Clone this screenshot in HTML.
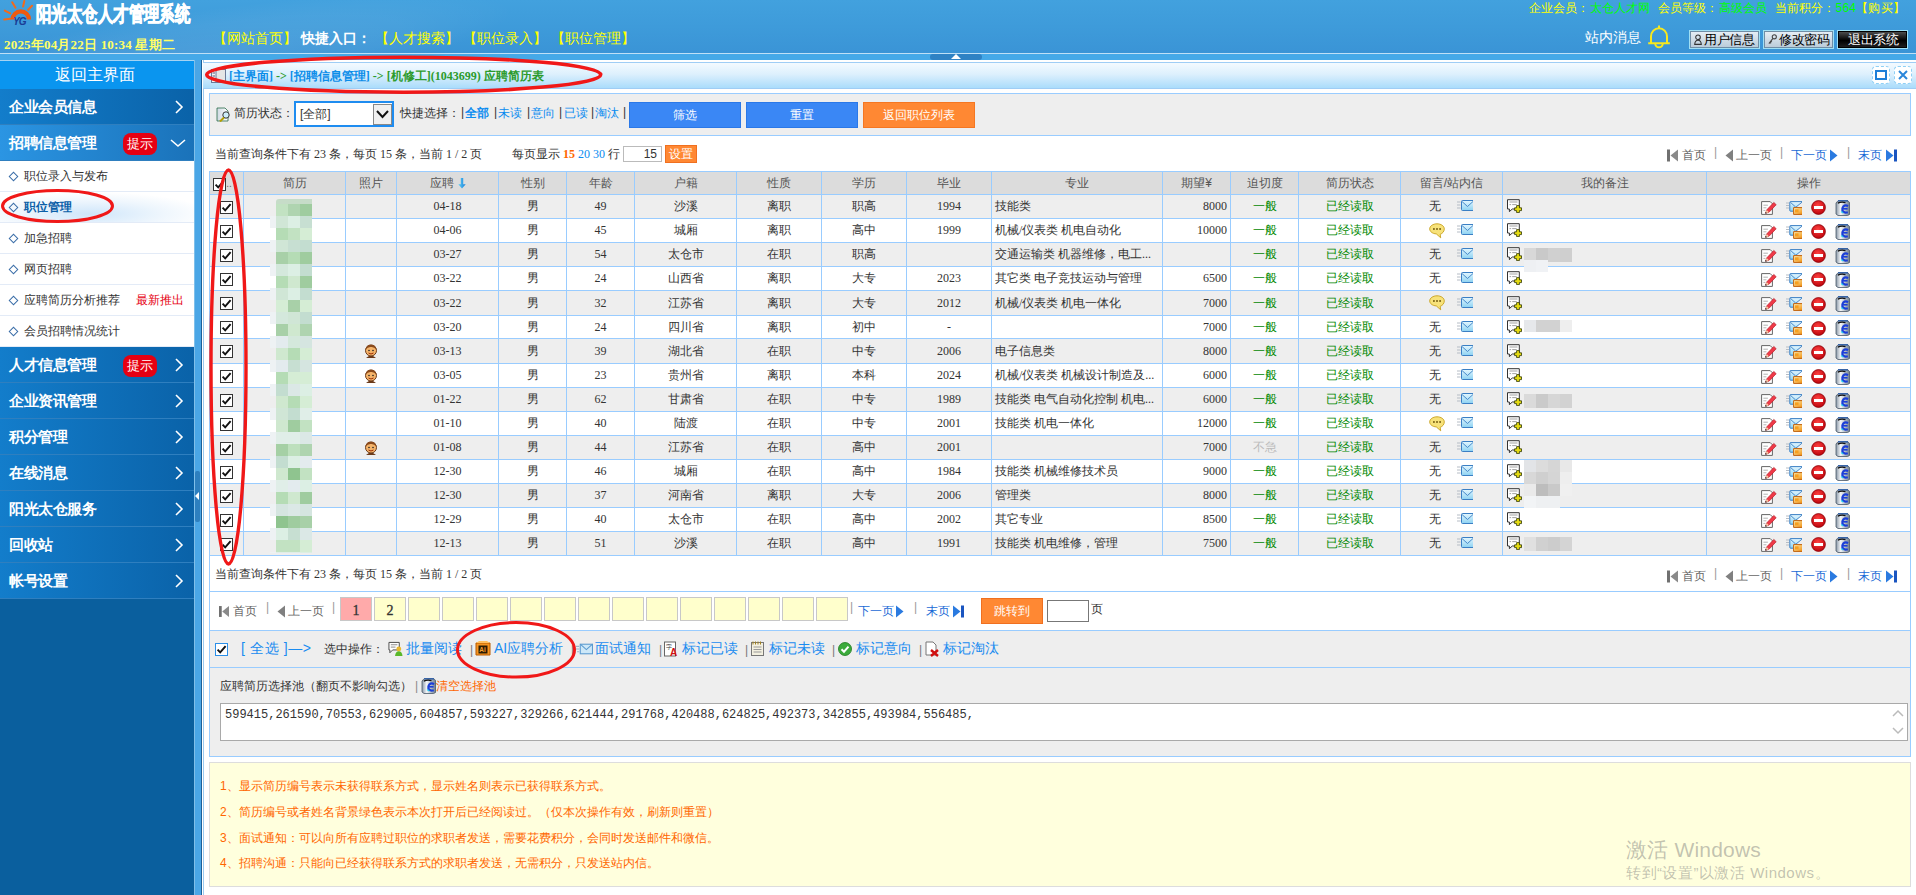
<!DOCTYPE html>
<html><head><meta charset="utf-8"><title>阳光太仓人才管理系统</title>
<style>
*{box-sizing:border-box}
html,body{margin:0;padding:0}
body{width:1916px;height:895px;overflow:hidden;position:relative;background:#fff;font-family:"Liberation Sans",sans-serif;font-size:12px;color:#333}
.a{position:absolute}
svg.ic{display:inline-block}
/* header */
#hdr{position:absolute;left:0;top:0;width:1916px;height:53px;background:linear-gradient(180deg,#42a1de 0%,#3e9bda 50%,#3a94d6 100%);overflow:hidden}
#hdr .swoosh{position:absolute;left:-120px;top:10px;width:640px;height:90px;background:radial-gradient(ellipse at center,rgba(255,255,255,0.09) 0%,rgba(255,255,255,0.05) 45%,rgba(255,255,255,0) 70%);transform:rotate(-8deg)}
#title{position:absolute;left:36px;top:0px;font-size:21px;line-height:28px;font-weight:bold;color:#fff;white-space:nowrap;transform:scaleX(0.735);transform-origin:0 0;-webkit-text-stroke:0.8px #fff}
#date{position:absolute;left:4px;top:36px;font-family:"Liberation Serif",serif;font-size:13px;font-weight:bold;color:#ffff66;white-space:nowrap;letter-spacing:0.2px}
#nav{position:absolute;left:213px;top:30px;font-size:14px;color:#ffff00;white-space:nowrap}
#nav b{color:#fff;font-weight:bold}
#minfo{position:absolute;right:11px;top:0px;font-size:12px;color:#ffff00;white-space:nowrap;letter-spacing:0.2px}
#minfo .gr{color:#00ff00}
#msg{position:absolute;left:1585px;top:29px;font-size:14px;color:#fff;white-space:nowrap}
.hbtn{position:absolute;top:30px;height:19px;border:1px solid #9fe0f5;background:linear-gradient(#e8f0f6,#b8cad8);box-shadow:inset 0 0 0 1px #6f8ea6;font-size:13px;line-height:17px;color:#000;white-space:nowrap;padding-left:4px;letter-spacing:-0.4px}
.hbtn.dark{background:linear-gradient(#555,#000 55%,#222);color:#fff;border-color:#9fe0f5;box-shadow:inset 0 0 0 1px #000;padding-left:10px}
#hline{position:absolute;left:0;top:53px;width:1916px;height:1px;background:#bfe0f6}
#strip{position:absolute;left:0;top:54px;width:1916px;height:6px;background:#45a9e8}
#tab{position:absolute;left:930px;top:54px;width:52px;height:6px;border-radius:3px;background:#2f82c4}
#tab:after{content:"";position:absolute;left:21px;top:0;border-left:5px solid transparent;border-right:5px solid transparent;border-bottom:5px solid #fff}
/* sidebar */
#side{position:absolute;left:0;top:60px;width:195px;height:835px;background:#0a5f9e;border-top:1px solid #a5d3f2}
#side .home{height:28px;background:#0a95ef;color:#fff;font-size:16px;text-align:center;line-height:27px;padding-right:6px}
.mi{position:relative;height:36px;border-bottom:1px solid #2f7fbf;background:linear-gradient(90deg,#137dcb 0%,#0a62a8 100%);color:#fff;font-size:15px;font-weight:bold;line-height:35px;padding-left:9px;white-space:nowrap;letter-spacing:-0.4px}
.mi.open{background:linear-gradient(90deg,#2b95e3 0%,#1a72b9 100%)}
.mi .arr{position:absolute;left:172px;top:11px;width:14px;height:14px}
.badge{position:absolute;left:123px;top:8px;width:34px;height:22px;border-radius:8px;background:#e60012;color:#fff;font-size:13px;font-weight:normal;line-height:22px;text-align:center;letter-spacing:0}
#sub{background:#fff;height:186px}
.si{position:relative;height:31px;border-bottom:1px solid #e3ebf7;font-size:12px;color:#333;line-height:30px;padding-left:24px;white-space:nowrap}
.si:before{content:"";position:absolute;left:10px;top:12px;width:5px;height:5px;border:1px solid #3b6ea8;transform:rotate(45deg)}
.si.sel{color:#0b5fa8;font-weight:bold;background:radial-gradient(ellipse 120px 22px at 90px 22px,#cfe6fa 0%,#eef6fd 60%,#fff 100%)}
.si .new{position:absolute;left:136px;color:#e60012}
/* splitter */
#split{position:absolute;left:194px;top:60px;width:10px;height:835px;background:#fff}
#split .b1{position:absolute;left:0;top:0;width:1px;height:835px;background:#7fbfea}
#split .b2{position:absolute;left:1px;top:0;width:6px;height:835px;background:#4aa6e6}
#split .b3{position:absolute;left:7px;top:0;width:1px;height:835px;background:#1d5f96}
#split .b4{position:absolute;left:9px;top:0;width:1px;height:835px;background:#9ccbf0}
#split .hdl{position:absolute;left:1px;top:411px;width:5px;height:51px;background:#2d7fbf;border-radius:2px}
#split .hdl:after{content:"";position:absolute;left:0;top:21px;border-top:4px solid transparent;border-bottom:4px solid transparent;border-right:4px solid #fff}
/* breadcrumb */
#crumb{position:absolute;left:203px;top:62px;width:1713px;height:27px;border-top:1px solid #9fcdf5;border-bottom:1px solid #9fcdf5;background:linear-gradient(180deg,#f3faff 0%,#ddf0fd 45%,#aadcfb 100%)}
#crumb .txt{position:absolute;left:26px;top:5px;font-size:12px;font-weight:bold;white-space:nowrap;font-family:"Liberation Serif",serif}
#crumb .bl{color:#0b8de9}
#crumb .gn{color:#2c9b2c}
.wbtn{position:absolute;top:3px;width:18px;height:18px;border:1px dashed #8fd0f5;border-radius:4px;background:#fff}
/* panels */
.pnl{position:absolute;left:209px;width:1702px;border:1px solid #99ccff}
#filter{top:93px;height:43px;background:#eee}
#filter .lbl{position:absolute;top:11px;white-space:nowrap;font-size:12px;color:#333}
#sel{position:absolute;left:84px;top:7px;width:100px;height:26px;border:2px solid #1e8cf0;background:#fff;font-size:12px;line-height:22px;padding-left:4px;color:#333}
#sel .dd{position:absolute;right:0;top:1px;width:19px;height:21px;border:1px solid #888;background:#f0f0f0}
.qs a{color:#0b8bf0;text-decoration:none}
.qs .sp{color:#888;margin:0 3px}
.btn{position:absolute;top:8px;height:26px;width:112px;color:#fff;text-align:center;line-height:24px;font-size:12px}
.btn.blue{background:#3a87f5;border:1px solid #2a78e8}
.btn.orange{background:#ff8833;border:1px solid #f57722}
#info1,#info2{position:absolute;left:215px;font-size:12px;color:#333;white-space:nowrap;font-family:"Liberation Serif",serif}
.pg{position:absolute;white-space:nowrap;font-size:12px;color:#666}
.pg .bl{color:#1a6ad6}
.pg .sep{color:#888;margin:0 6px}
/* grid */
#grid{position:absolute;left:209px;top:171px;border-collapse:collapse;table-layout:fixed;width:1701px;font-size:12px;font-family:"Liberation Serif",serif}
#grid th,#grid td{border:1px solid #99ccff;padding:0;text-align:center;white-space:nowrap;overflow:hidden;color:#333}
#grid th{height:23px;background:#dcdcdc;font-weight:normal;color:#555;font-family:"Liberation Sans",sans-serif;padding-top:1px}
#grid td{height:24px}
#grid tr.g td{background:#eeeeee}
#grid tr.w td{background:#fff}
#grid td.zy{text-align:left;padding-left:3px}
#grid td.qw{text-align:right;padding-right:3px}
#grid td.urg,#grid td.st{color:#008800}
#grid td.urg2{color:#bbb}
#grid td.bz{text-align:left;padding-left:4px}
#grid td.op{padding-right:6px}
#grid td.op svg{margin:0 4.5px;vertical-align:middle;position:relative;top:1px}
.cb{display:inline-block;width:13px;height:13px;vertical-align:middle}
.cbh{display:inline-block;width:13px;height:13px;vertical-align:middle;margin-left:-8px}
.dots{color:#666;font-size:10px;vertical-align:middle}
#grid td.ly{text-align:left;padding-left:28px}
.ly .lyl{display:inline-block;width:28px;text-align:left;vertical-align:middle}
.pbox{position:absolute;top:597px;width:32px;height:24px;border:1px solid #c8c8c8;background:#ffffcc;text-align:center;line-height:25px;font-family:"Liberation Serif",serif;font-size:14px;font-weight:normal;color:#333;-webkit-text-stroke:0.3px #333}
.pbox.cur{background:#ffaaaa}
.bt{white-space:nowrap;font-size:14px}
.bt.lk{color:#1a8cf0}
.bt .sp{color:#777;margin:0 4px;font-size:12px}
.note{left:220px;font-size:12px;color:#ff6600;white-space:nowrap}
.gm{background:#d6d6d6;box-shadow:0 0 3px 2px rgba(235,238,242,0.9)}
.sepq{color:#888}
.lq{color:#0b8bf0 !important}
.pgt{font-size:12px;color:#666;white-space:nowrap;line-height:14px}
.pgt.bl{color:#1a6ad6}
.pgs{font-size:12px;color:#999;line-height:14px}
#grid tr.h23 td{height:23px}
#grid tr.h25 td{height:25px}

</style></head><body>
<svg width="0" height="0" style="position:absolute"><defs>
<linearGradient id="gcyl" x1="0" x2="1"><stop offset="0" stop-color="#6c8aa8"/><stop offset="0.5" stop-color="#dfe9f3"/><stop offset="1" stop-color="#7f97ad"/></linearGradient>
<linearGradient id="gdoc" x1="0" x2="1"><stop offset="0" stop-color="#cfd9e3"/><stop offset="1" stop-color="#ffffff"/></linearGradient>
<linearGradient id="genv" x1="0" y1="0" x2="0" y2="1"><stop offset="0" stop-color="#e4f7ff"/><stop offset="1" stop-color="#8dd2f2"/></linearGradient><linearGradient id="gbox" x1="0" y1="0" x2="1" y2="1"><stop offset="0" stop-color="#fff6c0"/><stop offset="1" stop-color="#f09010"/></linearGradient><radialGradient id="gstop" cx="0.45" cy="0.35" r="0.7"><stop offset="0" stop-color="#ff4040"/><stop offset="1" stop-color="#b80008"/></radialGradient><linearGradient id="gbin" x1="0" x2="1"><stop offset="0" stop-color="#8a98a8"/><stop offset="0.35" stop-color="#f4f6f8"/><stop offset="1" stop-color="#6f7f90"/></linearGradient></defs>
<symbol id="i-check" viewBox="0 0 13 13"><rect x="0.5" y="0.5" width="12" height="12" fill="#fff" stroke="#333"/><path d="M2.6 6.6 L5.2 9.4 L10.6 3.2" fill="none" stroke="#111" stroke-width="1.9"/></symbol>
<symbol id="i-checkb" viewBox="0 0 13 13"><rect x="0.5" y="0.5" width="12" height="12" fill="#fff" stroke="#2b8fe8"/><path d="M2.6 6.6 L5.2 9.4 L10.6 3.2" fill="none" stroke="#111" stroke-width="1.9"/></symbol>
<symbol id="i-down" viewBox="0 0 8 11"><defs><linearGradient id="gdn" x1="0" x2="1"><stop offset="0" stop-color="#5fd0f8"/><stop offset="1" stop-color="#1a7fd8"/></linearGradient></defs><path d="M2.8 0h2.4v6.3h2.5L4 10.6 0.3 6.3h2.5z" fill="url(#gdn)"/></symbol>
<symbol id="i-face" viewBox="0 0 16 16"><path d="M3 15 Q8 10 13 15" fill="#6b3a1a"/><circle cx="8" cy="7.5" r="5.5" fill="#f5b46a" stroke="#6b3a1a" stroke-width="1"/><path d="M2.6 6.5 Q3 1.6 8 1.8 Q13 1.6 13.4 6.5 Q11 3.6 8 4 Q5 3.6 2.6 6.5z" fill="#8a4a1c"/><circle cx="6" cy="7.5" r="0.8" fill="#222"/><circle cx="10" cy="7.5" r="0.8" fill="#222"/><path d="M5.5 10 Q8 12 10.5 10" fill="none" stroke="#9a2a00" stroke-width="1"/></symbol>
<symbol id="i-chat" viewBox="0 0 16 16"><path d="M8 0.8C3.9 0.8 0.7 3.1 0.7 5.9c0 2.6 2.8 4.8 6.6 5l4.4 3.9-0.5-3.5c2.3-0.8 4.1-2.9 4.1-5.4 0-2.8-3.2-5.1-7.3-5.1z" fill="#f7e27a" stroke="#c7a01e" stroke-width="0.9"/><path d="M4 6h1.8M7.1 6h1.8M10.2 6H12" stroke="#6a5208" stroke-width="1.6"/></symbol>
<symbol id="i-mail" viewBox="0 0 16 11"><path d="M0 2h3.5M0 5h3.5M0 8h3.5" stroke="#b5bcc5" stroke-width="1"/><path d="M16 0.5H5.5Q4.5 0.5 4.5 1.5V9.5Q4.5 10.5 5.5 10.5H16" fill="url(#genv)" stroke="#3b7fc4" stroke-width="1"/><path d="M5 1.5L10.5 6.5L16 1.5" fill="none" stroke="#3b7fc4" stroke-width="0.9"/></symbol>
<symbol id="i-noteadd" viewBox="0 0 15 14"><path d="M0.5 0.7H12.3V10H5.3L2.4 12.6V10H0.5Z" fill="#fff" stroke="#333" stroke-width="1"/><path d="M2.5 3h8M2.5 5.6h1.6M5.2 5.6h4.5" stroke="#999" stroke-width="0.9"/><path d="M9.6 6.6h2.8v2.2h2.1v2.8h-2.1v2h-2.8v-2H7.6V8.8h2z" fill="#e6dc12" stroke="#2e3600" stroke-width="0.8"/></symbol>
<symbol id="i-edit" viewBox="0 0 16 14"><path d="M0.6 0.6H9.2L11.4 2.8V13.4H0.6Z" fill="#fff" stroke="#666" stroke-width="1"/><path d="M2.4 4.2h4.5M2.4 6.8h3M2.4 9.4h2" stroke="#aaa" stroke-width="0.9"/><path d="M4.6 12.2l1-3.2 7.2-7.6 2.4 2.3-7.2 7.6z" fill="#ef3a48" stroke="#b0101c" stroke-width="0.6"/><path d="M4.6 12.2l1-3.2 2.3 2.2z" fill="#f4d2a8"/><circle cx="4.9" cy="11.9" r="0.7" fill="#111"/></symbol>
<symbol id="i-mailbox" viewBox="0 0 16 14"><path d="M0 2h3M0 4.5h3M0 7h3" stroke="#b5bcc5" stroke-width="1"/><path d="M16 0.6H4.5Q3.8 0.6 3.8 1.3V9.5Q3.8 10.2 4.5 10.2H7" fill="url(#genv)" stroke="#3b7fc4" stroke-width="1"/><path d="M4.3 1.2L9.8 6.2L16 1.2" fill="none" stroke="#3b7fc4" stroke-width="0.9"/><path d="M16 6.6H7.6V13.4H16" fill="url(#gbox)" stroke="#c0600a" stroke-width="1"/><rect x="9" y="8.3" width="3.6" height="3.2" fill="#f7a020"/></symbol>
<symbol id="i-stop" viewBox="0 0 15 15"><circle cx="7.5" cy="7.5" r="6.9" fill="url(#gstop)" stroke="#8a0008" stroke-width="0.8"/><rect x="3" y="6" width="9" height="3" fill="#fff"/></symbol>
<symbol id="i-recycle" viewBox="0 0 15 16"><path d="M1 3L3 0.8H13L14.5 2.5V14.5L12.5 15.5H3L1 14z" fill="url(#gbin)" stroke="#4a5868" stroke-width="0.8"/><path d="M3 0.8H13" stroke="#2f5fa8" stroke-width="1.4"/><path d="M2.8 3.2Q6 1.6 10.5 2.6" stroke="#111" stroke-width="1.3" fill="none"/><path d="M13 6.2Q10.5 4.6 8.2 6.6Q6.8 8.2 7.4 10.6Q8.8 13.4 12.8 12.2" fill="none" stroke="#1c3fd8" stroke-width="2.2"/><path d="M8 8.8H12.6" stroke="#1c3fd8" stroke-width="1.6"/><path d="M6.2 11.5L8.2 13" stroke="#22d0f0" stroke-width="1.4"/></symbol>

<symbol id="i-first" viewBox="0 0 11 13"><rect x="0" y="0.5" width="3" height="12" fill="#707070"/><path d="M11 0.5v12L3.5 6.5z" fill="#8a8a8a"/></symbol>
<symbol id="i-prev" viewBox="0 0 8 13"><path d="M8 0.5v12L0.5 6.5z" fill="#808080"/></symbol>
<symbol id="i-next" viewBox="0 0 8 13"><path d="M0 0.5v12L7.5 6.5z" fill="#2a7ae0"/></symbol>
<symbol id="i-last" viewBox="0 0 11 13"><path d="M0 0.5v12L7.5 6.5z" fill="#2a7ae0"/><rect x="8" y="0.5" width="3" height="12" fill="#1a55c0"/></symbol>
<symbol id="i-logo" viewBox="0 0 34 26"><g stroke="#f26a1b" stroke-width="2" stroke-linecap="round"><path d="M12.2 2.3L15.4 7.6M24.3 1L23.1 6.6M32 5.8L28.2 9.8M4.8 10.6L10.2 13.3M4.3 19.6L10.2 18.8"/></g><path d="M12.6 19.5A8.2 8.2 0 0 1 29 19.5" fill="none" stroke="#ee5a10" stroke-width="4.2"/><text x="13" y="24.5" font-family="Liberation Sans" font-size="10" font-weight="bold" font-style="italic" fill="#1a3d95" letter-spacing="-1">YG</text></symbol>
<symbol id="i-bell" viewBox="0 0 26 28"><path d="M5 21.2V14.5A8 8.3 0 0 1 21 14.5V21.2M2.2 21.2H23.8M13 3.5V6.3M9.2 21.5A3.8 3.8 0 0 0 16.8 21.5" fill="none" stroke="#f8e81e" stroke-width="2"/></symbol>
<symbol id="i-user" viewBox="0 0 9 12"><circle cx="4.5" cy="3.5" r="2.6" fill="none" stroke="#333" stroke-width="1.2"/><path d="M0.8 11.5 Q1 6.8 4.5 6.8 Q8 6.8 8.2 11.5z" fill="none" stroke="#333" stroke-width="1.2"/></symbol>
<symbol id="i-key" viewBox="0 0 10 12"><circle cx="7" cy="3" r="2.3" fill="none" stroke="#444" stroke-width="1.2"/><path d="M5.5 4.8L1 10.5M2 9l1.5 1.2M3 7.6l1.3 1" stroke="#444" stroke-width="1.2"/></symbol>
<symbol id="i-crumb" viewBox="0 0 15 14"><rect x="0.5" y="0.5" width="14" height="13" fill="#f4f4f4" stroke="#6a7a9a"/><rect x="5" y="1" width="9" height="12" fill="#e5e5e5"/><path d="M1.5 4h2.5M1.5 7h2.5M1.5 10h2.5" stroke="#557" stroke-width="1"/><path d="M5 0.5v13" stroke="#6a7a9a"/></symbol>
<symbol id="i-search" viewBox="0 0 15 15"><path d="M1 1h8l3 3v10H1z" fill="url(#gdoc)" stroke="#2a6a4a" stroke-width="0.8"/><circle cx="10" cy="8" r="3.2" fill="#cdeefa" stroke="#333" stroke-width="1"/><path d="M8 10.5l-4 4" stroke="#b5a000" stroke-width="2"/></symbol>
<symbol id="i-batch" viewBox="0 0 16 16"><path d="M1 1.5h11v8H5l-3 3v-3H1z" fill="#fff" stroke="#444"/><path d="M3 4h7M3 6.5h5" stroke="#888"/><circle cx="11.5" cy="8.5" r="2.6" fill="#e8b830"/><path d="M7.5 16 Q8 11 11.5 11 Q15 11 15.5 16z" fill="#5ab82a"/></symbol>
<symbol id="i-ai" viewBox="0 0 16 15"><path d="M1 2h14v12H1z" fill="#f79520" stroke="#b65a00"/><rect x="3.5" y="4.5" width="9" height="8" fill="#2a1a00"/><text x="4.2" y="11.4" font-family="Liberation Sans" font-size="6.5" font-weight="bold" fill="#f7a030">Ai</text><path d="M1 2l3-2h8l3 2" fill="#ffc060"/></symbol>
<symbol id="i-mail2" viewBox="0 0 16 11"><path d="M0 3h3M0 5.5h3M1 8h2" stroke="#9ab6c8"/><rect x="4" y="1" width="11.5" height="9" fill="#cde8f8" stroke="#5a9ad0"/><path d="M4 1l5.75 5 5.75-5" fill="none" stroke="#5a9ad0"/></symbol>
<symbol id="i-font" viewBox="0 0 15 16"><rect x="0.5" y="1" width="11" height="14" fill="#fff" stroke="#666"/><text x="1.5" y="8" font-size="6" fill="#333" font-family="Liberation Sans">字</text><text x="6" y="15" font-size="10" fill="#d01010" font-weight="bold" font-family="Liberation Sans">A</text></symbol>
<symbol id="i-pad" viewBox="0 0 13 15"><rect x="0.5" y="1.5" width="12" height="13" fill="#f3f0e0" stroke="#777"/><path d="M2 0.5v3M4.5 0.5v3M7 0.5v3M9.5 0.5v3" stroke="#a08020"/><path d="M2.5 6h8M2.5 8.5h8M2.5 11h8" stroke="#999"/></symbol>
<symbol id="i-ok" viewBox="0 0 14 14"><circle cx="7" cy="7" r="6.5" fill="#3cab3c" stroke="#1a7a1a" stroke-width="0.8"/><path d="M3.5 7.2l2.5 2.5 4.5-5" fill="none" stroke="#fff" stroke-width="2"/></symbol>
<symbol id="i-xdoc" viewBox="0 0 15 16"><path d="M1 1h7l3 3v10H1z" fill="#fff" stroke="#777"/><path d="M6 9l7 6M13 9l-7 6" stroke="#d01010" stroke-width="2.4"/></symbol>
<symbol id="i-max" viewBox="0 0 18 18"><rect x="4" y="5" width="10" height="8" fill="none" stroke="#1e7fd8" stroke-width="2"/></symbol>
<symbol id="i-close" viewBox="0 0 18 18"><path d="M5 5l8 8M13 5l-8 8" stroke="#2a86da" stroke-width="2"/></symbol>
</svg>
<div id="hdr">
  <div class="swoosh"></div>
  <svg class="a" style="left:0;top:0" width="34" height="26"><use href="#i-logo"/></svg>
  <div id="title">阳光太仓人才管理系统</div>
  <div id="date">2025年04月22日 10:34 星期二</div>
  <div id="nav">【网站首页】 <b>快捷入口：</b> 【人才搜索】 【职位录入】 【职位管理】</div>
  <div id="minfo">企业会员：<span class="gr">太仓人才网</span>&nbsp; 会员等级：<span class="gr">高级会员</span>&nbsp; 当前积分：<span class="gr">564</span>【购买】</div>
  <div id="msg">站内消息</div>
  <svg class="a" style="left:1646px;top:22px" width="26" height="28"><use href="#i-bell"/></svg>
  <div class="hbtn" style="left:1689px;width:71px"><svg width="8" height="11" style="vertical-align:-1px;margin-right:2px"><use href="#i-user"/></svg>用户信息</div>
  <div class="hbtn" style="left:1763px;width:71px"><svg width="9" height="11" style="vertical-align:-1px;margin-right:2px"><use href="#i-key"/></svg>修改密码</div>
  <div class="hbtn dark" style="left:1837px;width:71px">退出系统</div>
</div>
<div id="hline"></div>
<div id="strip"></div>
<div id="tab"></div>

<div id="side">
  <div class="home">返回主界面</div>
  <div class="mi">企业会员信息<svg class="arr" viewBox="0 0 14 14"><path d="M4 1l6 6-6 6" fill="none" stroke="#fff" stroke-width="1.6"/></svg></div>
  <div class="mi open">招聘信息管理<span class="badge">提示</span><svg class="arr" style="left:170px;width:16px" viewBox="0 0 16 14"><path d="M1 4l7 6 7-6" fill="none" stroke="#fff" stroke-width="1.6"/></svg></div>
  <div id="sub">
    <div class="si">职位录入与发布</div>
    <div class="si sel">职位管理</div>
    <div class="si">加急招聘</div>
    <div class="si">网页招聘</div>
    <div class="si">应聘简历分析推荐<span class="new">最新推出</span></div>
    <div class="si">会员招聘情况统计</div>
  </div>
  <div class="mi">人才信息管理<span class="badge">提示</span><svg class="arr" viewBox="0 0 14 14"><path d="M4 1l6 6-6 6" fill="none" stroke="#fff" stroke-width="1.6"/></svg></div>
  <div class="mi">企业资讯管理<svg class="arr" viewBox="0 0 14 14"><path d="M4 1l6 6-6 6" fill="none" stroke="#fff" stroke-width="1.6"/></svg></div>
  <div class="mi">积分管理<svg class="arr" viewBox="0 0 14 14"><path d="M4 1l6 6-6 6" fill="none" stroke="#fff" stroke-width="1.6"/></svg></div>
  <div class="mi">在线消息<svg class="arr" viewBox="0 0 14 14"><path d="M4 1l6 6-6 6" fill="none" stroke="#fff" stroke-width="1.6"/></svg></div>
  <div class="mi">阳光太仓服务<svg class="arr" viewBox="0 0 14 14"><path d="M4 1l6 6-6 6" fill="none" stroke="#fff" stroke-width="1.6"/></svg></div>
  <div class="mi">回收站<svg class="arr" viewBox="0 0 14 14"><path d="M4 1l6 6-6 6" fill="none" stroke="#fff" stroke-width="1.6"/></svg></div>
  <div class="mi">帐号设置<svg class="arr" viewBox="0 0 14 14"><path d="M4 1l6 6-6 6" fill="none" stroke="#fff" stroke-width="1.6"/></svg></div>
</div>
<div id="split"><div class="b1"></div><div class="b2"></div><div class="b3"></div><div class="b4"></div><div class="hdl"></div></div>

<div id="crumb">
  <svg class="a" style="left:8px;top:6px" width="15" height="14"><use href="#i-crumb"/></svg>
  <div class="txt"><span class="bl">[主界面]</span> <span class="gn">-&gt;</span> <span class="bl">[招聘信息管理]</span> <span class="gn">-&gt; [机修工](1043699) 应聘简历表</span></div>
  <div class="wbtn" style="left:1669px"><svg width="18" height="18" style="position:absolute;left:-1px;top:-1px"><use href="#i-max"/></svg></div>
  <div class="wbtn" style="left:1691px"><svg width="18" height="18" style="position:absolute;left:-1px;top:-1px"><use href="#i-close"/></svg></div>
</div>

<div id="filter" class="pnl">
  <svg class="a" style="left:6px;top:13px" width="15" height="15"><use href="#i-search"/></svg>
  <div class="lbl" style="left:24px">简历状态：</div>
  <div id="sel">[全部]<div class="dd"><svg width="17" height="19" style="position:absolute;left:0;top:0"><path d="M3 6l5.5 6 5.5-6" fill="none" stroke="#111" stroke-width="2"/></svg></div></div>
  <div class="lbl" style="left:190px">快捷选择：</div>
<div class="lbl sepq" style="left:251px">|</div><div class="lbl sepq" style="left:284px">|</div><div class="lbl sepq" style="left:317px">|</div><div class="lbl sepq" style="left:349px">|</div><div class="lbl sepq" style="left:381px">|</div><div class="lbl sepq" style="left:413px">|</div><div class="lbl lq" style="left:255px;font-weight:bold">全部</div><div class="lbl lq" style="left:288px">未读</div><div class="lbl lq" style="left:321px">意向</div><div class="lbl lq" style="left:354px">已读</div><div class="lbl lq" style="left:385px">淘汰</div>
  <div class="btn blue" style="left:419px">筛选</div>
  <div class="btn blue" style="left:536px">重置</div>
  <div class="btn orange" style="left:653px">返回职位列表</div>
</div>

<div id="info1" style="top:146px">当前查询条件下有 23 条，每页 15 条，当前 1 / 2 页</div>
<div class="a" style="left:512px;top:146px;white-space:nowrap;font-family:'Liberation Serif',serif">每页显示 <b style="color:#ff6600">15</b> <span style="color:#0b8bf0">20</span> <span style="color:#0b8bf0">30</span> 行</div>
<div class="a" style="left:623px;top:146px;width:39px;height:16px;border:1px solid #bbb;background:#fff;text-align:right;padding-right:4px;line-height:14px;font-size:12px;color:#333">15</div>
<div class="a" style="left:665px;top:145px;width:32px;height:18px;background:#ff8833;border:1px solid #f07020;color:#fff;text-align:center;line-height:16px">设置</div>
<svg class="a" style="left:1667px;top:149px" width="11" height="13"><use href="#i-first"/></svg><div class="a pgt" style="left:1682px;top:148px">首页</div><div class="a pgs" style="left:1714px;top:145px">|</div><svg class="a" style="left:1725px;top:149px" width="8" height="13"><use href="#i-prev"/></svg><div class="a pgt" style="left:1736px;top:148px">上一页</div><div class="a pgs" style="left:1780px;top:145px">|</div><div class="a pgt bl" style="left:1791px;top:148px">下一页</div><svg class="a" style="left:1830px;top:149px" width="8" height="13"><use href="#i-next"/></svg><div class="a pgs" style="left:1847px;top:145px">|</div><div class="a pgt bl" style="left:1858px;top:148px">末页</div><svg class="a" style="left:1886px;top:149px" width="11" height="13"><use href="#i-last"/></svg>

<table id="grid"><colgroup><col style="width:34px"><col style="width:102px"><col style="width:51px"><col style="width:102px"><col style="width:68px"><col style="width:68px"><col style="width:102px"><col style="width:85px"><col style="width:85px"><col style="width:85px"><col style="width:171px"><col style="width:68px"><col style="width:68px"><col style="width:102px"><col style="width:102px"><col style="width:204px"><col style="width:204px"></colgroup>
<tr class="hd">
<th><span class="cbh"><svg width="13" height="13"><use href="#i-check"/></svg></span><span class="dots">..</span></th>
<th>简历</th>
<th>照片</th>
<th>应聘<svg width="8" height="11" style="vertical-align:-2px;margin-left:4px"><use href="#i-down"/></svg></th>
<th>性别</th>
<th>年龄</th>
<th>户籍</th>
<th>性质</th>
<th>学历</th>
<th>毕业</th>
<th>专业</th>
<th>期望¥</th>
<th>迫切度</th>
<th>简历状态</th>
<th>留言/站内信</th>
<th>我的备注</th>
<th>操作</th>
</tr>
<tr class="g">
<td><span class="cb"><svg width="13" height="13"><use href="#i-check"/></svg></span></td>
<td class="mos"></td>
<td></td>
<td class="n">04-18</td>
<td>男</td>
<td class="n">49</td>
<td>沙溪</td>
<td>离职</td>
<td>职高</td>
<td class="n">1994</td>
<td class="zy">技能类</td>
<td class="n qw">8000</td>
<td class="urg">一般</td>
<td class="st">已经读取</td>
<td class="ly"><span class="lyl"><span class="wu">无</span></span><svg class="ic" width="16" height="11" style="vertical-align:middle;position:relative;top:-1px"><use href="#i-mail"/></svg></td>
<td class="bz"><svg class="ic" width="15" height="14" style="vertical-align:middle;position:relative;top:-1px"><use href="#i-noteadd"/></svg></td>
<td class="op"><svg class="ic" width="16" height="14" style=""><use href="#i-edit"/></svg><svg class="ic" width="16" height="14" style=""><use href="#i-mailbox"/></svg><svg class="ic" width="15" height="15" style=""><use href="#i-stop"/></svg><svg class="ic" width="15" height="16" style=""><use href="#i-recycle"/></svg></td>
</tr>
<tr class="w">
<td><span class="cb"><svg width="13" height="13"><use href="#i-check"/></svg></span></td>
<td class="mos"></td>
<td></td>
<td class="n">04-06</td>
<td>男</td>
<td class="n">45</td>
<td>城厢</td>
<td>离职</td>
<td>高中</td>
<td class="n">1999</td>
<td class="zy">机械/仪表类 机电自动化</td>
<td class="n qw">10000</td>
<td class="urg">一般</td>
<td class="st">已经读取</td>
<td class="ly"><span class="lyl"><svg class="ic" width="16" height="16" style="vertical-align:middle"><use href="#i-chat"/></svg></span><svg class="ic" width="16" height="11" style="vertical-align:middle;position:relative;top:-1px"><use href="#i-mail"/></svg></td>
<td class="bz"><svg class="ic" width="15" height="14" style="vertical-align:middle;position:relative;top:-1px"><use href="#i-noteadd"/></svg></td>
<td class="op"><svg class="ic" width="16" height="14" style=""><use href="#i-edit"/></svg><svg class="ic" width="16" height="14" style=""><use href="#i-mailbox"/></svg><svg class="ic" width="15" height="15" style=""><use href="#i-stop"/></svg><svg class="ic" width="15" height="16" style=""><use href="#i-recycle"/></svg></td>
</tr>
<tr class="g">
<td><span class="cb"><svg width="13" height="13"><use href="#i-check"/></svg></span></td>
<td class="mos"></td>
<td></td>
<td class="n">03-27</td>
<td>男</td>
<td class="n">54</td>
<td>太仓市</td>
<td>在职</td>
<td>职高</td>
<td class="n"></td>
<td class="zy">交通运输类 机器维修，电工...</td>
<td class="n qw"></td>
<td class="urg">一般</td>
<td class="st">已经读取</td>
<td class="ly"><span class="lyl"><span class="wu">无</span></span><svg class="ic" width="16" height="11" style="vertical-align:middle;position:relative;top:-1px"><use href="#i-mail"/></svg></td>
<td class="bz"><svg class="ic" width="15" height="14" style="vertical-align:middle;position:relative;top:-1px"><use href="#i-noteadd"/></svg></td>
<td class="op"><svg class="ic" width="16" height="14" style=""><use href="#i-edit"/></svg><svg class="ic" width="16" height="14" style=""><use href="#i-mailbox"/></svg><svg class="ic" width="15" height="15" style=""><use href="#i-stop"/></svg><svg class="ic" width="15" height="16" style=""><use href="#i-recycle"/></svg></td>
</tr>
<tr class="w">
<td><span class="cb"><svg width="13" height="13"><use href="#i-check"/></svg></span></td>
<td class="mos"></td>
<td></td>
<td class="n">03-22</td>
<td>男</td>
<td class="n">24</td>
<td>山西省</td>
<td>离职</td>
<td>大专</td>
<td class="n">2023</td>
<td class="zy">其它类 电子竞技运动与管理</td>
<td class="n qw">6500</td>
<td class="urg">一般</td>
<td class="st">已经读取</td>
<td class="ly"><span class="lyl"><span class="wu">无</span></span><svg class="ic" width="16" height="11" style="vertical-align:middle;position:relative;top:-1px"><use href="#i-mail"/></svg></td>
<td class="bz"><svg class="ic" width="15" height="14" style="vertical-align:middle;position:relative;top:-1px"><use href="#i-noteadd"/></svg></td>
<td class="op"><svg class="ic" width="16" height="14" style=""><use href="#i-edit"/></svg><svg class="ic" width="16" height="14" style=""><use href="#i-mailbox"/></svg><svg class="ic" width="15" height="15" style=""><use href="#i-stop"/></svg><svg class="ic" width="15" height="16" style=""><use href="#i-recycle"/></svg></td>
</tr>
<tr class="g h25">
<td><span class="cb"><svg width="13" height="13"><use href="#i-check"/></svg></span></td>
<td class="mos"></td>
<td></td>
<td class="n">03-22</td>
<td>男</td>
<td class="n">32</td>
<td>江苏省</td>
<td>离职</td>
<td>大专</td>
<td class="n">2012</td>
<td class="zy">机械/仪表类 机电一体化</td>
<td class="n qw">7000</td>
<td class="urg">一般</td>
<td class="st">已经读取</td>
<td class="ly"><span class="lyl"><svg class="ic" width="16" height="16" style="vertical-align:middle"><use href="#i-chat"/></svg></span><svg class="ic" width="16" height="11" style="vertical-align:middle;position:relative;top:-1px"><use href="#i-mail"/></svg></td>
<td class="bz"><svg class="ic" width="15" height="14" style="vertical-align:middle;position:relative;top:-1px"><use href="#i-noteadd"/></svg></td>
<td class="op"><svg class="ic" width="16" height="14" style=""><use href="#i-edit"/></svg><svg class="ic" width="16" height="14" style=""><use href="#i-mailbox"/></svg><svg class="ic" width="15" height="15" style=""><use href="#i-stop"/></svg><svg class="ic" width="15" height="16" style=""><use href="#i-recycle"/></svg></td>
</tr>
<tr class="w h23">
<td><span class="cb"><svg width="13" height="13"><use href="#i-check"/></svg></span></td>
<td class="mos"></td>
<td></td>
<td class="n">03-20</td>
<td>男</td>
<td class="n">24</td>
<td>四川省</td>
<td>离职</td>
<td>初中</td>
<td class="n">-</td>
<td class="zy"></td>
<td class="n qw">7000</td>
<td class="urg">一般</td>
<td class="st">已经读取</td>
<td class="ly"><span class="lyl"><span class="wu">无</span></span><svg class="ic" width="16" height="11" style="vertical-align:middle;position:relative;top:-1px"><use href="#i-mail"/></svg></td>
<td class="bz"><svg class="ic" width="15" height="14" style="vertical-align:middle;position:relative;top:-1px"><use href="#i-noteadd"/></svg></td>
<td class="op"><svg class="ic" width="16" height="14" style=""><use href="#i-edit"/></svg><svg class="ic" width="16" height="14" style=""><use href="#i-mailbox"/></svg><svg class="ic" width="15" height="15" style=""><use href="#i-stop"/></svg><svg class="ic" width="15" height="16" style=""><use href="#i-recycle"/></svg></td>
</tr>
<tr class="g h25">
<td><span class="cb"><svg width="13" height="13"><use href="#i-check"/></svg></span></td>
<td class="mos"></td>
<td><svg class="ic" width="16" height="16" style="vertical-align:middle"><use href="#i-face"/></svg></td>
<td class="n">03-13</td>
<td>男</td>
<td class="n">39</td>
<td>湖北省</td>
<td>在职</td>
<td>中专</td>
<td class="n">2006</td>
<td class="zy">电子信息类</td>
<td class="n qw">8000</td>
<td class="urg">一般</td>
<td class="st">已经读取</td>
<td class="ly"><span class="lyl"><span class="wu">无</span></span><svg class="ic" width="16" height="11" style="vertical-align:middle;position:relative;top:-1px"><use href="#i-mail"/></svg></td>
<td class="bz"><svg class="ic" width="15" height="14" style="vertical-align:middle;position:relative;top:-1px"><use href="#i-noteadd"/></svg></td>
<td class="op"><svg class="ic" width="16" height="14" style=""><use href="#i-edit"/></svg><svg class="ic" width="16" height="14" style=""><use href="#i-mailbox"/></svg><svg class="ic" width="15" height="15" style=""><use href="#i-stop"/></svg><svg class="ic" width="15" height="16" style=""><use href="#i-recycle"/></svg></td>
</tr>
<tr class="w">
<td><span class="cb"><svg width="13" height="13"><use href="#i-check"/></svg></span></td>
<td class="mos"></td>
<td><svg class="ic" width="16" height="16" style="vertical-align:middle"><use href="#i-face"/></svg></td>
<td class="n">03-05</td>
<td>男</td>
<td class="n">23</td>
<td>贵州省</td>
<td>离职</td>
<td>本科</td>
<td class="n">2024</td>
<td class="zy">机械/仪表类 机械设计制造及...</td>
<td class="n qw">6000</td>
<td class="urg">一般</td>
<td class="st">已经读取</td>
<td class="ly"><span class="lyl"><span class="wu">无</span></span><svg class="ic" width="16" height="11" style="vertical-align:middle;position:relative;top:-1px"><use href="#i-mail"/></svg></td>
<td class="bz"><svg class="ic" width="15" height="14" style="vertical-align:middle;position:relative;top:-1px"><use href="#i-noteadd"/></svg></td>
<td class="op"><svg class="ic" width="16" height="14" style=""><use href="#i-edit"/></svg><svg class="ic" width="16" height="14" style=""><use href="#i-mailbox"/></svg><svg class="ic" width="15" height="15" style=""><use href="#i-stop"/></svg><svg class="ic" width="15" height="16" style=""><use href="#i-recycle"/></svg></td>
</tr>
<tr class="g">
<td><span class="cb"><svg width="13" height="13"><use href="#i-check"/></svg></span></td>
<td class="mos"></td>
<td></td>
<td class="n">01-22</td>
<td>男</td>
<td class="n">62</td>
<td>甘肃省</td>
<td>在职</td>
<td>中专</td>
<td class="n">1989</td>
<td class="zy">技能类 电气自动化控制 机电...</td>
<td class="n qw">6000</td>
<td class="urg">一般</td>
<td class="st">已经读取</td>
<td class="ly"><span class="lyl"><span class="wu">无</span></span><svg class="ic" width="16" height="11" style="vertical-align:middle;position:relative;top:-1px"><use href="#i-mail"/></svg></td>
<td class="bz"><svg class="ic" width="15" height="14" style="vertical-align:middle;position:relative;top:-1px"><use href="#i-noteadd"/></svg></td>
<td class="op"><svg class="ic" width="16" height="14" style=""><use href="#i-edit"/></svg><svg class="ic" width="16" height="14" style=""><use href="#i-mailbox"/></svg><svg class="ic" width="15" height="15" style=""><use href="#i-stop"/></svg><svg class="ic" width="15" height="16" style=""><use href="#i-recycle"/></svg></td>
</tr>
<tr class="w">
<td><span class="cb"><svg width="13" height="13"><use href="#i-check"/></svg></span></td>
<td class="mos"></td>
<td></td>
<td class="n">01-10</td>
<td>男</td>
<td class="n">40</td>
<td>陆渡</td>
<td>在职</td>
<td>中专</td>
<td class="n">2001</td>
<td class="zy">技能类 机电一体化</td>
<td class="n qw">12000</td>
<td class="urg">一般</td>
<td class="st">已经读取</td>
<td class="ly"><span class="lyl"><svg class="ic" width="16" height="16" style="vertical-align:middle"><use href="#i-chat"/></svg></span><svg class="ic" width="16" height="11" style="vertical-align:middle;position:relative;top:-1px"><use href="#i-mail"/></svg></td>
<td class="bz"><svg class="ic" width="15" height="14" style="vertical-align:middle;position:relative;top:-1px"><use href="#i-noteadd"/></svg></td>
<td class="op"><svg class="ic" width="16" height="14" style=""><use href="#i-edit"/></svg><svg class="ic" width="16" height="14" style=""><use href="#i-mailbox"/></svg><svg class="ic" width="15" height="15" style=""><use href="#i-stop"/></svg><svg class="ic" width="15" height="16" style=""><use href="#i-recycle"/></svg></td>
</tr>
<tr class="g">
<td><span class="cb"><svg width="13" height="13"><use href="#i-check"/></svg></span></td>
<td class="mos"></td>
<td><svg class="ic" width="16" height="16" style="vertical-align:middle"><use href="#i-face"/></svg></td>
<td class="n">01-08</td>
<td>男</td>
<td class="n">44</td>
<td>江苏省</td>
<td>在职</td>
<td>高中</td>
<td class="n">2001</td>
<td class="zy"></td>
<td class="n qw">7000</td>
<td class="urg2">不急</td>
<td class="st">已经读取</td>
<td class="ly"><span class="lyl"><span class="wu">无</span></span><svg class="ic" width="16" height="11" style="vertical-align:middle;position:relative;top:-1px"><use href="#i-mail"/></svg></td>
<td class="bz"><svg class="ic" width="15" height="14" style="vertical-align:middle;position:relative;top:-1px"><use href="#i-noteadd"/></svg></td>
<td class="op"><svg class="ic" width="16" height="14" style=""><use href="#i-edit"/></svg><svg class="ic" width="16" height="14" style=""><use href="#i-mailbox"/></svg><svg class="ic" width="15" height="15" style=""><use href="#i-stop"/></svg><svg class="ic" width="15" height="16" style=""><use href="#i-recycle"/></svg></td>
</tr>
<tr class="w">
<td><span class="cb"><svg width="13" height="13"><use href="#i-check"/></svg></span></td>
<td class="mos"></td>
<td></td>
<td class="n">12-30</td>
<td>男</td>
<td class="n">46</td>
<td>城厢</td>
<td>在职</td>
<td>高中</td>
<td class="n">1984</td>
<td class="zy">技能类 机械维修技术员</td>
<td class="n qw">9000</td>
<td class="urg">一般</td>
<td class="st">已经读取</td>
<td class="ly"><span class="lyl"><span class="wu">无</span></span><svg class="ic" width="16" height="11" style="vertical-align:middle;position:relative;top:-1px"><use href="#i-mail"/></svg></td>
<td class="bz"><svg class="ic" width="15" height="14" style="vertical-align:middle;position:relative;top:-1px"><use href="#i-noteadd"/></svg></td>
<td class="op"><svg class="ic" width="16" height="14" style=""><use href="#i-edit"/></svg><svg class="ic" width="16" height="14" style=""><use href="#i-mailbox"/></svg><svg class="ic" width="15" height="15" style=""><use href="#i-stop"/></svg><svg class="ic" width="15" height="16" style=""><use href="#i-recycle"/></svg></td>
</tr>
<tr class="g">
<td><span class="cb"><svg width="13" height="13"><use href="#i-check"/></svg></span></td>
<td class="mos"></td>
<td></td>
<td class="n">12-30</td>
<td>男</td>
<td class="n">37</td>
<td>河南省</td>
<td>离职</td>
<td>大专</td>
<td class="n">2006</td>
<td class="zy">管理类</td>
<td class="n qw">8000</td>
<td class="urg">一般</td>
<td class="st">已经读取</td>
<td class="ly"><span class="lyl"><span class="wu">无</span></span><svg class="ic" width="16" height="11" style="vertical-align:middle;position:relative;top:-1px"><use href="#i-mail"/></svg></td>
<td class="bz"><svg class="ic" width="15" height="14" style="vertical-align:middle;position:relative;top:-1px"><use href="#i-noteadd"/></svg></td>
<td class="op"><svg class="ic" width="16" height="14" style=""><use href="#i-edit"/></svg><svg class="ic" width="16" height="14" style=""><use href="#i-mailbox"/></svg><svg class="ic" width="15" height="15" style=""><use href="#i-stop"/></svg><svg class="ic" width="15" height="16" style=""><use href="#i-recycle"/></svg></td>
</tr>
<tr class="w">
<td><span class="cb"><svg width="13" height="13"><use href="#i-check"/></svg></span></td>
<td class="mos"></td>
<td></td>
<td class="n">12-29</td>
<td>男</td>
<td class="n">40</td>
<td>太仓市</td>
<td>在职</td>
<td>高中</td>
<td class="n">2002</td>
<td class="zy">其它专业</td>
<td class="n qw">8500</td>
<td class="urg">一般</td>
<td class="st">已经读取</td>
<td class="ly"><span class="lyl"><span class="wu">无</span></span><svg class="ic" width="16" height="11" style="vertical-align:middle;position:relative;top:-1px"><use href="#i-mail"/></svg></td>
<td class="bz"><svg class="ic" width="15" height="14" style="vertical-align:middle;position:relative;top:-1px"><use href="#i-noteadd"/></svg></td>
<td class="op"><svg class="ic" width="16" height="14" style=""><use href="#i-edit"/></svg><svg class="ic" width="16" height="14" style=""><use href="#i-mailbox"/></svg><svg class="ic" width="15" height="15" style=""><use href="#i-stop"/></svg><svg class="ic" width="15" height="16" style=""><use href="#i-recycle"/></svg></td>
</tr>
<tr class="g">
<td><span class="cb"><svg width="13" height="13"><use href="#i-check"/></svg></span></td>
<td class="mos"></td>
<td></td>
<td class="n">12-13</td>
<td>男</td>
<td class="n">51</td>
<td>沙溪</td>
<td>在职</td>
<td>高中</td>
<td class="n">1991</td>
<td class="zy">技能类 机电维修，管理</td>
<td class="n qw">7500</td>
<td class="urg">一般</td>
<td class="st">已经读取</td>
<td class="ly"><span class="lyl"><span class="wu">无</span></span><svg class="ic" width="16" height="11" style="vertical-align:middle;position:relative;top:-1px"><use href="#i-mail"/></svg></td>
<td class="bz"><svg class="ic" width="15" height="14" style="vertical-align:middle;position:relative;top:-1px"><use href="#i-noteadd"/></svg></td>
<td class="op"><svg class="ic" width="16" height="14" style=""><use href="#i-edit"/></svg><svg class="ic" width="16" height="14" style=""><use href="#i-mailbox"/></svg><svg class="ic" width="15" height="15" style=""><use href="#i-stop"/></svg><svg class="ic" width="15" height="16" style=""><use href="#i-recycle"/></svg></td>
</tr>
</table>

<div id="lowbox" class="a" style="left:209px;top:555px;width:1702px;height:202px;border:1px solid #99ccff;border-top:none"></div>
<div id="info2" style="top:566px">当前查询条件下有 23 条，每页 15 条，当前 1 / 2 页</div>
<svg class="a" style="left:1667px;top:570px" width="11" height="13"><use href="#i-first"/></svg><div class="a pgt" style="left:1682px;top:569px">首页</div><div class="a pgs" style="left:1714px;top:566px">|</div><svg class="a" style="left:1725px;top:570px" width="8" height="13"><use href="#i-prev"/></svg><div class="a pgt" style="left:1736px;top:569px">上一页</div><div class="a pgs" style="left:1780px;top:566px">|</div><div class="a pgt bl" style="left:1791px;top:569px">下一页</div><svg class="a" style="left:1830px;top:570px" width="8" height="13"><use href="#i-next"/></svg><div class="a pgs" style="left:1847px;top:566px">|</div><div class="a pgt bl" style="left:1858px;top:569px">末页</div><svg class="a" style="left:1886px;top:570px" width="11" height="13"><use href="#i-last"/></svg>
<div class="a" style="left:210px;top:591px;width:1700px;height:1px;background:#99ccff"></div>
<div class="a" style="left:210px;top:630px;width:1700px;height:1px;background:#99ccff"></div>
<div id="batch" class="a" style="left:210px;top:631px;width:1700px;height:36px;background:#eee"></div>
<div class="a" style="left:210px;top:667px;width:1700px;height:1px;background:#99ccff"></div>
<div id="pool" class="a" style="left:210px;top:668px;width:1700px;height:88px;background:#eee"></div>
<div id="notes" class="a" style="left:209px;top:762px;width:1702px;height:125px;border:1px solid #ddd;background:#ffffdd"></div>


<svg class="a" style="left:219px;top:605px" width="10" height="13"><use href="#i-first"/></svg><div class="a pgt" style="left:233px;top:604px">首页</div><div class="a pgs" style="left:266px;top:600px">|</div><svg class="a" style="left:277px;top:605px" width="8" height="13"><use href="#i-prev"/></svg><div class="a pgt" style="left:288px;top:604px">上一页</div><div class="a pgs" style="left:332px;top:600px">|</div>

<div class="pbox cur" style="left:340px">1</div><div class="pbox" style="left:374px">2</div><div class="pbox" style="left:408px"></div><div class="pbox" style="left:442px"></div><div class="pbox" style="left:476px"></div><div class="pbox" style="left:510px"></div><div class="pbox" style="left:544px"></div><div class="pbox" style="left:578px"></div><div class="pbox" style="left:612px"></div><div class="pbox" style="left:646px"></div><div class="pbox" style="left:680px"></div><div class="pbox" style="left:714px"></div><div class="pbox" style="left:748px"></div><div class="pbox" style="left:782px"></div><div class="pbox" style="left:816px"></div>
<div class="a pgs" style="left:850px;top:600px">|</div><div class="a pgt bl" style="left:858px;top:604px">下一页</div><svg class="a" style="left:896px;top:605px" width="8" height="13"><use href="#i-next"/></svg><div class="a pgs" style="left:914px;top:600px">|</div><div class="a pgt bl" style="left:926px;top:604px">末页</div><svg class="a" style="left:953px;top:605px" width="11" height="13"><use href="#i-last"/></svg>
<div class="a" style="left:981px;top:598px;width:62px;height:26px;background:#ff8833;border:1px solid #f07020;color:#fff;text-align:center;line-height:24px">跳转到</div>
<div class="a" style="left:1047px;top:600px;width:42px;height:22px;border:1px solid #777;background:#fff"></div>
<div class="a" style="left:1091px;top:601px;font-size:12px;color:#333">页</div>

<svg class="a" style="left:215px;top:643px" width="13" height="13"><use href="#i-checkb"/></svg>
<div class="a bt" style="left:241px;top:640px;color:#1a8cf0;letter-spacing:0.6px">[ 全选 ]—&gt;</div>
<div class="a bt" style="left:324px;color:#333;font-size:12px;top:641px">选中操作：</div>
<svg class="a" style="left:388px;top:641px" width="15" height="15"><use href="#i-batch"/></svg><div class="a bt lk" style="left:406px;top:640px">批量阅读</div><div class="a" style="left:470px;top:643px;color:#777;font-size:12px">|</div>
<svg class="a" style="left:475px;top:641px" width="16" height="15"><use href="#i-ai"/></svg><div class="a bt lk" style="left:494px;top:640px">AI应聘分析</div><div class="a" style="left:571px;top:643px;color:#777;font-size:12px">|</div>
<svg class="a" style="left:576px;top:643px" width="17" height="12"><use href="#i-mail2"/></svg><div class="a bt lk" style="left:595px;top:640px">面试通知</div><div class="a" style="left:659px;top:643px;color:#777;font-size:12px">|</div>
<svg class="a" style="left:664px;top:641px" width="15" height="16"><use href="#i-font"/></svg><div class="a bt lk" style="left:682px;top:640px">标记已读</div><div class="a" style="left:745px;top:643px;color:#777;font-size:12px">|</div>
<svg class="a" style="left:751px;top:641px" width="13" height="15"><use href="#i-pad"/></svg><div class="a bt lk" style="left:769px;top:640px">标记未读</div><div class="a" style="left:832px;top:643px;color:#777;font-size:12px">|</div>
<svg class="a" style="left:838px;top:642px" width="14" height="14"><use href="#i-ok"/></svg><div class="a bt lk" style="left:856px;top:640px">标记意向</div><div class="a" style="left:919px;top:643px;color:#777;font-size:12px">|</div>
<svg class="a" style="left:925px;top:641px" width="15" height="16"><use href="#i-xdoc"/></svg><div class="a bt lk" style="left:943px;top:640px">标记淘汰</div>


<div class="a" style="left:220px;top:678px;font-size:12px;color:#333;white-space:nowrap">应聘简历选择池（翻页不影响勾选）<span style="color:#888;margin:0 3px">|</span><svg width="15" height="16" style="vertical-align:-4px"><use href="#i-recycle"/></svg><span style="color:#ff6600">清空选择池</span></div>
<div class="a" style="left:220px;top:703px;width:1688px;height:38px;border:1px solid #a9a9a9;background:#fff;font-family:'Liberation Mono',monospace;font-size:12px;color:#333;padding:4px 0 0 4px;white-space:nowrap">599415,261590,70553,629005,604857,593227,329266,621444,291768,420488,624825,492373,342855,493984,556485,</div>
<svg class="a" style="left:1890px;top:705px" width="16" height="34"><path d="M3 11l5-5 5 5M3 23l5 5 5-5" fill="none" stroke="#bbb" stroke-width="1.5"/></svg>

<div class="a note" style="top:778px">1、显示简历编号表示未获得联系方式，显示姓名则表示已获得联系方式。</div>
<div class="a note" style="top:804px">2、简历编号或者姓名背景绿色表示本次打开后已经阅读过。（仅本次操作有效，刷新则重置）</div>
<div class="a note" style="top:830px">3、面试通知：可以向所有应聘过职位的求职者发送，需要花费积分，会同时发送邮件和微信。</div>
<div class="a note" style="top:855px">4、招聘沟通：只能向已经获得联系方式的求职者发送，无需积分，只发送站内信。</div>

<div class="a" style="left:1626px;top:836px;font-size:21px;color:rgba(120,120,120,0.45);white-space:nowrap;letter-spacing:0.2px">激活 Windows</div>
<div class="a" style="left:1626px;top:864px;font-size:15px;color:rgba(120,120,120,0.45);white-space:nowrap;letter-spacing:0.5px">转到“设置”以激活 Windows。</div>

<div class="a" style="left:276px;top:199px;width:36px;height:5px;background:#c6dcc8;border-radius:3px 0 0 0"></div>
<div class="a" style="left:276px;top:204px;width:12px;height:12px;background:#c2e2c2"></div>
<div class="a" style="left:288px;top:204px;width:12px;height:12px;background:#afd4b0"></div>
<div class="a" style="left:300px;top:204px;width:12px;height:12px;background:#9fcc9f"></div>
<div class="a" style="left:276px;top:216px;width:12px;height:12px;background:#d0e6d6"></div>
<div class="a" style="left:288px;top:216px;width:12px;height:12px;background:#dcefe4"></div>
<div class="a" style="left:300px;top:216px;width:12px;height:12px;background:#c7dfd2"></div>
<div class="a" style="left:270px;top:216px;width:6px;height:12px;background:#eef2f4"></div>
<div class="a" style="left:276px;top:228px;width:12px;height:12px;background:#b5dcb5"></div>
<div class="a" style="left:288px;top:228px;width:12px;height:12px;background:#c2e2c2"></div>
<div class="a" style="left:300px;top:228px;width:12px;height:12px;background:#d5edd5"></div>
<div class="a" style="left:276px;top:240px;width:12px;height:12px;background:#d0e6d6"></div>
<div class="a" style="left:288px;top:240px;width:12px;height:12px;background:#c7dfd2"></div>
<div class="a" style="left:300px;top:240px;width:12px;height:12px;background:#c3ddd0"></div>
<div class="a" style="left:270px;top:240px;width:6px;height:12px;background:#eef2f4"></div>
<div class="a" style="left:276px;top:252px;width:12px;height:12px;background:#a8d0a8"></div>
<div class="a" style="left:288px;top:252px;width:12px;height:12px;background:#b5dcb5"></div>
<div class="a" style="left:300px;top:252px;width:12px;height:12px;background:#9fcc9f"></div>
<div class="a" style="left:276px;top:264px;width:12px;height:12px;background:#d4e8dc"></div>
<div class="a" style="left:288px;top:264px;width:12px;height:12px;background:#dcefe4"></div>
<div class="a" style="left:300px;top:264px;width:12px;height:12px;background:#c3ddd0"></div>
<div class="a" style="left:270px;top:264px;width:6px;height:12px;background:#eef2f4"></div>
<div class="a" style="left:276px;top:276px;width:12px;height:12px;background:#b5dcb5"></div>
<div class="a" style="left:288px;top:276px;width:12px;height:12px;background:#cfe8cf"></div>
<div class="a" style="left:300px;top:276px;width:12px;height:12px;background:#9fcc9f"></div>
<div class="a" style="left:276px;top:288px;width:12px;height:12px;background:#d0e6d6"></div>
<div class="a" style="left:288px;top:288px;width:12px;height:12px;background:#dcefe4"></div>
<div class="a" style="left:300px;top:288px;width:12px;height:12px;background:#c3ddd0"></div>
<div class="a" style="left:270px;top:288px;width:6px;height:12px;background:#eef2f4"></div>
<div class="a" style="left:276px;top:300px;width:12px;height:12px;background:#d5edd5"></div>
<div class="a" style="left:288px;top:300px;width:12px;height:12px;background:#a8d0a8"></div>
<div class="a" style="left:300px;top:300px;width:12px;height:12px;background:#d5edd5"></div>
<div class="a" style="left:276px;top:312px;width:12px;height:12px;background:#d4e8dc"></div>
<div class="a" style="left:288px;top:312px;width:12px;height:12px;background:#d0e6d6"></div>
<div class="a" style="left:300px;top:312px;width:12px;height:12px;background:#c3ddd0"></div>
<div class="a" style="left:270px;top:312px;width:6px;height:12px;background:#eef2f4"></div>
<div class="a" style="left:276px;top:324px;width:12px;height:12px;background:#a8d0a8"></div>
<div class="a" style="left:288px;top:324px;width:12px;height:12px;background:#cfe8cf"></div>
<div class="a" style="left:300px;top:324px;width:12px;height:12px;background:#afd4b0"></div>
<div class="a" style="left:276px;top:336px;width:12px;height:12px;background:#e3ebee"></div>
<div class="a" style="left:288px;top:336px;width:12px;height:12px;background:#d4e8dc"></div>
<div class="a" style="left:300px;top:336px;width:12px;height:12px;background:#d5e5e0"></div>
<div class="a" style="left:270px;top:336px;width:6px;height:12px;background:#eef2f4"></div>
<div class="a" style="left:276px;top:348px;width:12px;height:12px;background:#cfe8cf"></div>
<div class="a" style="left:288px;top:348px;width:12px;height:12px;background:#b5dcb5"></div>
<div class="a" style="left:300px;top:348px;width:12px;height:12px;background:#d5edd5"></div>
<div class="a" style="left:276px;top:360px;width:12px;height:12px;background:#e3ebee"></div>
<div class="a" style="left:288px;top:360px;width:12px;height:12px;background:#c7dfd2"></div>
<div class="a" style="left:300px;top:360px;width:12px;height:12px;background:#d5e5e0"></div>
<div class="a" style="left:270px;top:360px;width:6px;height:12px;background:#eef2f4"></div>
<div class="a" style="left:276px;top:372px;width:12px;height:12px;background:#b5dcb5"></div>
<div class="a" style="left:288px;top:372px;width:12px;height:12px;background:#d5edd5"></div>
<div class="a" style="left:300px;top:372px;width:12px;height:12px;background:#d5edd5"></div>
<div class="a" style="left:276px;top:384px;width:12px;height:12px;background:#c3ddd0"></div>
<div class="a" style="left:288px;top:384px;width:12px;height:12px;background:#dbe8e6"></div>
<div class="a" style="left:300px;top:384px;width:12px;height:12px;background:#dcefe4"></div>
<div class="a" style="left:270px;top:384px;width:6px;height:12px;background:#eef2f4"></div>
<div class="a" style="left:276px;top:396px;width:12px;height:12px;background:#cfe8cf"></div>
<div class="a" style="left:288px;top:396px;width:12px;height:12px;background:#b5dcb5"></div>
<div class="a" style="left:300px;top:396px;width:12px;height:12px;background:#d5edd5"></div>
<div class="a" style="left:276px;top:408px;width:12px;height:12px;background:#d0e6d6"></div>
<div class="a" style="left:288px;top:408px;width:12px;height:12px;background:#c3ddd0"></div>
<div class="a" style="left:300px;top:408px;width:12px;height:12px;background:#e0eee8"></div>
<div class="a" style="left:270px;top:408px;width:6px;height:12px;background:#eef2f4"></div>
<div class="a" style="left:276px;top:420px;width:12px;height:12px;background:#cfe8cf"></div>
<div class="a" style="left:288px;top:420px;width:12px;height:12px;background:#9fcc9f"></div>
<div class="a" style="left:300px;top:420px;width:12px;height:12px;background:#c2e2c2"></div>
<div class="a" style="left:276px;top:432px;width:12px;height:12px;background:#e0eee8"></div>
<div class="a" style="left:288px;top:432px;width:12px;height:12px;background:#e0eee8"></div>
<div class="a" style="left:300px;top:432px;width:12px;height:12px;background:#dbe8e6"></div>
<div class="a" style="left:270px;top:432px;width:6px;height:12px;background:#eef2f4"></div>
<div class="a" style="left:276px;top:444px;width:12px;height:12px;background:#a5d0a5"></div>
<div class="a" style="left:288px;top:444px;width:12px;height:12px;background:#bde0bd"></div>
<div class="a" style="left:300px;top:444px;width:12px;height:12px;background:#afd4b0"></div>
<div class="a" style="left:276px;top:456px;width:12px;height:12px;background:#c3ddd0"></div>
<div class="a" style="left:288px;top:456px;width:12px;height:12px;background:#dcefe4"></div>
<div class="a" style="left:300px;top:456px;width:12px;height:12px;background:#e3ebee"></div>
<div class="a" style="left:270px;top:456px;width:6px;height:12px;background:#eef2f4"></div>
<div class="a" style="left:276px;top:468px;width:12px;height:12px;background:#cfe8cf"></div>
<div class="a" style="left:288px;top:468px;width:12px;height:12px;background:#8fc48f"></div>
<div class="a" style="left:300px;top:468px;width:12px;height:12px;background:#c2e2c2"></div>
<div class="a" style="left:276px;top:480px;width:12px;height:12px;background:#e0eee8"></div>
<div class="a" style="left:288px;top:480px;width:12px;height:12px;background:#e3ebee"></div>
<div class="a" style="left:300px;top:480px;width:12px;height:12px;background:#dcefe4"></div>
<div class="a" style="left:270px;top:480px;width:6px;height:12px;background:#eef2f4"></div>
<div class="a" style="left:276px;top:492px;width:12px;height:12px;background:#b5dcb5"></div>
<div class="a" style="left:288px;top:492px;width:12px;height:12px;background:#cfe8cf"></div>
<div class="a" style="left:300px;top:492px;width:12px;height:12px;background:#9fcc9f"></div>
<div class="a" style="left:276px;top:504px;width:12px;height:12px;background:#d5e5e0"></div>
<div class="a" style="left:288px;top:504px;width:12px;height:12px;background:#dbe8e6"></div>
<div class="a" style="left:300px;top:504px;width:12px;height:12px;background:#d5e5e0"></div>
<div class="a" style="left:270px;top:504px;width:6px;height:12px;background:#eef2f4"></div>
<div class="a" style="left:276px;top:516px;width:12px;height:12px;background:#8fc48f"></div>
<div class="a" style="left:288px;top:516px;width:12px;height:12px;background:#9fcc9f"></div>
<div class="a" style="left:300px;top:516px;width:12px;height:12px;background:#a8d0a8"></div>
<div class="a" style="left:276px;top:528px;width:12px;height:12px;background:#dcefe4"></div>
<div class="a" style="left:288px;top:528px;width:12px;height:12px;background:#c7dfd2"></div>
<div class="a" style="left:300px;top:528px;width:12px;height:12px;background:#dbe8e6"></div>
<div class="a" style="left:270px;top:528px;width:6px;height:12px;background:#eef2f4"></div>
<div class="a" style="left:276px;top:540px;width:12px;height:12px;background:#c2e2c2"></div>
<div class="a" style="left:288px;top:540px;width:12px;height:12px;background:#c2e2c2"></div>
<div class="a" style="left:300px;top:540px;width:12px;height:12px;background:#d5edd5"></div>
<div class="a" style="left:276px;top:552px;width:12px;height:1px;background:#e0eee8"></div>
<div class="a" style="left:288px;top:552px;width:12px;height:1px;background:#e0eee8"></div>
<div class="a" style="left:300px;top:552px;width:12px;height:1px;background:#dcefe4"></div>
<div class="a" style="left:270px;top:552px;width:6px;height:1px;background:#eef2f4"></div>
<div class="a" style="left:1524px;top:248px;width:12px;height:14px;background:#d8d8d8"></div><div class="a" style="left:1536px;top:248px;width:12px;height:14px;background:#c9c9c9"></div><div class="a" style="left:1548px;top:248px;width:12px;height:14px;background:#d0d0d0"></div><div class="a" style="left:1560px;top:248px;width:12px;height:14px;background:#cfcfcf"></div><div class="a" style="left:1524px;top:260px;width:12px;height:12px;background:#eef0f3"></div><div class="a" style="left:1536px;top:260px;width:12px;height:12px;background:#f0f2f5"></div><div class="a" style="left:1524px;top:320px;width:12px;height:12px;background:#e6e8eb"></div><div class="a" style="left:1536px;top:320px;width:12px;height:12px;background:#d2d2d2"></div><div class="a" style="left:1548px;top:320px;width:12px;height:12px;background:#d2d2d2"></div><div class="a" style="left:1560px;top:320px;width:12px;height:12px;background:#eeeeee"></div><div class="a" style="left:1524px;top:394px;width:12px;height:14px;background:#dadada"></div><div class="a" style="left:1536px;top:394px;width:12px;height:14px;background:#cacaca"></div><div class="a" style="left:1548px;top:394px;width:12px;height:14px;background:#d6d6d6"></div><div class="a" style="left:1560px;top:394px;width:12px;height:14px;background:#d2d2d2"></div><div class="a" style="left:1524px;top:460px;width:12px;height:12px;background:#e2e4e7"></div><div class="a" style="left:1536px;top:460px;width:12px;height:12px;background:#dcdcdc"></div><div class="a" style="left:1548px;top:460px;width:12px;height:12px;background:#d6d6d6"></div><div class="a" style="left:1560px;top:460px;width:12px;height:12px;background:#e8e8e8"></div><div class="a" style="left:1524px;top:472px;width:12px;height:12px;background:#d8d8d8"></div><div class="a" style="left:1536px;top:472px;width:12px;height:12px;background:#cfcfcf"></div><div class="a" style="left:1548px;top:472px;width:12px;height:12px;background:#d5d5d5"></div><div class="a" style="left:1560px;top:472px;width:12px;height:12px;background:#eeeeee"></div><div class="a" style="left:1524px;top:484px;width:12px;height:12px;background:#eaeaea"></div><div class="a" style="left:1536px;top:484px;width:12px;height:12px;background:#bdbdbd"></div><div class="a" style="left:1548px;top:484px;width:12px;height:12px;background:#c9c9c9"></div><div class="a" style="left:1560px;top:484px;width:12px;height:12px;background:#f0f0f0"></div><div class="a" style="left:1524px;top:496px;width:12px;height:12px;background:#f2f4f6"></div><div class="a" style="left:1536px;top:496px;width:12px;height:12px;background:#eef0f2"></div><div class="a" style="left:1548px;top:496px;width:12px;height:12px;background:#eef0f2"></div><div class="a" style="left:1524px;top:537px;width:12px;height:14px;background:#e0e0e0"></div><div class="a" style="left:1536px;top:537px;width:12px;height:14px;background:#d0d0d0"></div><div class="a" style="left:1548px;top:537px;width:12px;height:14px;background:#cccccc"></div><div class="a" style="left:1560px;top:537px;width:12px;height:14px;background:#d4d4d4"></div>

<svg class="a" style="left:0;top:0;pointer-events:none" width="1916" height="895">
<g fill="none" stroke="#f01818" stroke-width="3">
<ellipse cx="403.7" cy="74.7" rx="197" ry="17.5" stroke-width="3.6"/>
<ellipse cx="57.5" cy="206" rx="55" ry="15.5"/>
<ellipse cx="228.5" cy="367" rx="17.5" ry="197" stroke-width="3.4"/>
<ellipse cx="516" cy="649.8" rx="58.5" ry="27.3"/>
</g></svg>


</body></html>
